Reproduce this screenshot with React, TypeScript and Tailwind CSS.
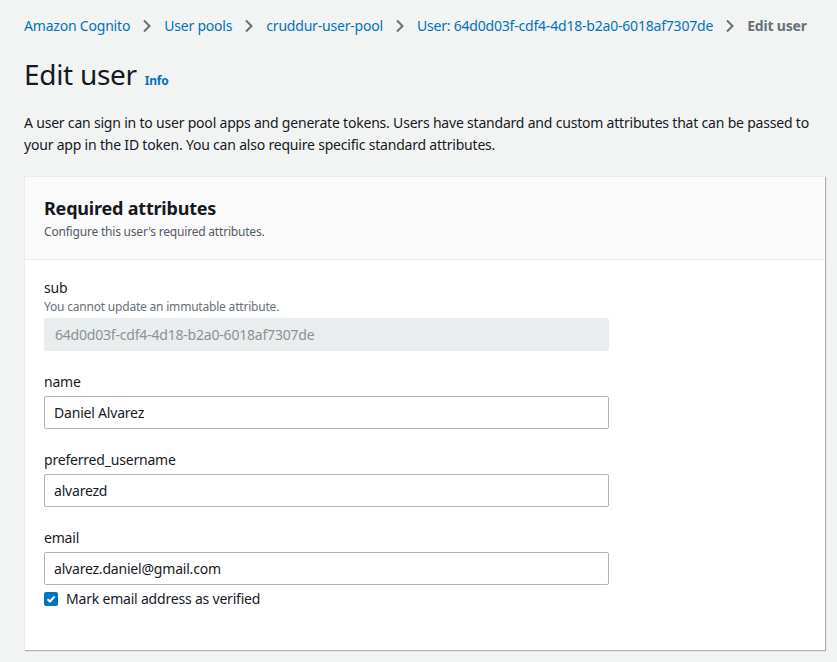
import React, { useState } from "react";

function Chevron() {
  return (
    <svg width="10" height="16" viewBox="0 0 10 16" className="mx-[12px] shrink-0">
      <path d="M2 2.5 7.5 8 2 13.5" fill="none" stroke="#687078" strokeWidth="2" />
    </svg>
  );
}

function Field({
  label,
  hint,
  value,
  onChange,
  disabled,
}: {
  label: string;
  hint?: string;
  value: string;
  onChange?: (v: string) => void;
  disabled?: boolean;
}) {
  return (
    <div className="flex flex-col">
      <label className="text-[14px] leading-[22px] text-[#16191f]">{label}</label>
      {hint && <span className="text-[12px] leading-[16px] text-[#687078]">{hint}</span>}
      <input
        value={value}
        disabled={disabled}
        onChange={(e) => onChange?.(e.target.value)}
        className={
          disabled
            ? "mt-[3px] w-[565px] h-[33px] px-[10px] rounded-[2px] bg-[#eaeded] border border-[#eaeded] text-[14px] tracking-[-0.2px] text-[#879596]"
            : "mt-[3px] w-[565px] h-[33px] px-[9px] rounded-[2px] bg-white border border-[#aab7b8] text-[14px] tracking-[-0.2px] text-[#16191f] outline-none"
        }
      />
    </div>
  );
}

export default function App() {
  const [name, setName] = useState("Daniel Alvarez");
  const [username, setUsername] = useState("alvarezd");
  const [email, setEmail] = useState("alvarez.daniel@gmail.com");
  const [verified, setVerified] = useState(true);

  return (
    <div
      className="min-h-screen bg-[#f2f3f3] px-[24px] pt-[16px] text-[#16191f] tracking-[-0.2px]"
      style={{ fontFamily: '"Noto Sans", "Open Sans", sans-serif' }}
    >
      <nav className="flex items-center whitespace-nowrap text-[14px] leading-[20px]">
        <a className="text-[#0073bb]">Amazon Cognito</a>
        <Chevron />
        <a className="text-[#0073bb]">User pools</a>
        <Chevron />
        <a className="text-[#0073bb]">cruddur-user-pool</a>
        <Chevron />
        <a className="text-[#0073bb]">User: 64d0d03f-cdf4-4d18-b2a0-6018af7307de</a>
        <Chevron />
        <span className="font-bold text-[#687078]">Edit user</span>
      </nav>

      <div className="mt-[20px] flex items-baseline gap-[8px]">
        <h1 className="text-[28px] leading-[36px] font-normal tracking-[-0.3px]">Edit user</h1>
        <a className="text-[12px] font-bold text-[#0073bb]">Info</a>
      </div>

      <p className="mt-[20px] text-[14px] leading-[22px]">
        A user can sign in to user pool apps and generate tokens. Users have standard and custom attributes that can be passed to your app in the ID token. You can also require specific standard attributes.
      </p>

      <div className="mt-[20px] mr-[-12px] bg-white border-t border-l border-[#eaeded] shadow-[1px_1px_1px_0_rgba(0,28,36,0.3)]">
        <div className="bg-[#fafafa] border-b border-[#eaeded] px-[19px] pt-[18px] pb-[19px]">
          <h2 className="text-[18px] leading-[26px] font-bold">Required attributes</h2>
          <p className="mt-[3px] text-[12px] leading-[16px] text-[#545b64]">Configure this user's required attributes.</p>
        </div>
        <div className="px-[19px] pt-[17px] pb-[40px] flex flex-col gap-[20px]">
          <Field label="sub" hint="You cannot update an immutable attribute." value="64d0d03f-cdf4-4d18-b2a0-6018af7307de" disabled />
          <Field label="name" value={name} onChange={setName} />
          <Field label="preferred_username" value={username} onChange={setUsername} />
          <div className="flex flex-col">
            <Field label="email" value={email} onChange={setEmail} />
            <label className="mt-[3px] flex items-center gap-[8px] text-[14px] leading-[22px]">
              <button
                type="button"
                onClick={() => setVerified(!verified)}
                className={
                  verified
                    ? "w-[14px] h-[14px] rounded-[2px] bg-[#0073bb] flex items-center justify-center"
                    : "w-[14px] h-[14px] rounded-[2px] border border-[#aab7b8] bg-white"
                }
              >
                {verified && (
                  <svg width="10" height="10" viewBox="0 0 10 10">
                    <path d="M1.5 5.2 4 7.5 8.5 2.5" fill="none" stroke="white" strokeWidth="2" />
                  </svg>
                )}
              </button>
              Mark email address as verified
            </label>
          </div>
        </div>
      </div>
    </div>
  );
}
